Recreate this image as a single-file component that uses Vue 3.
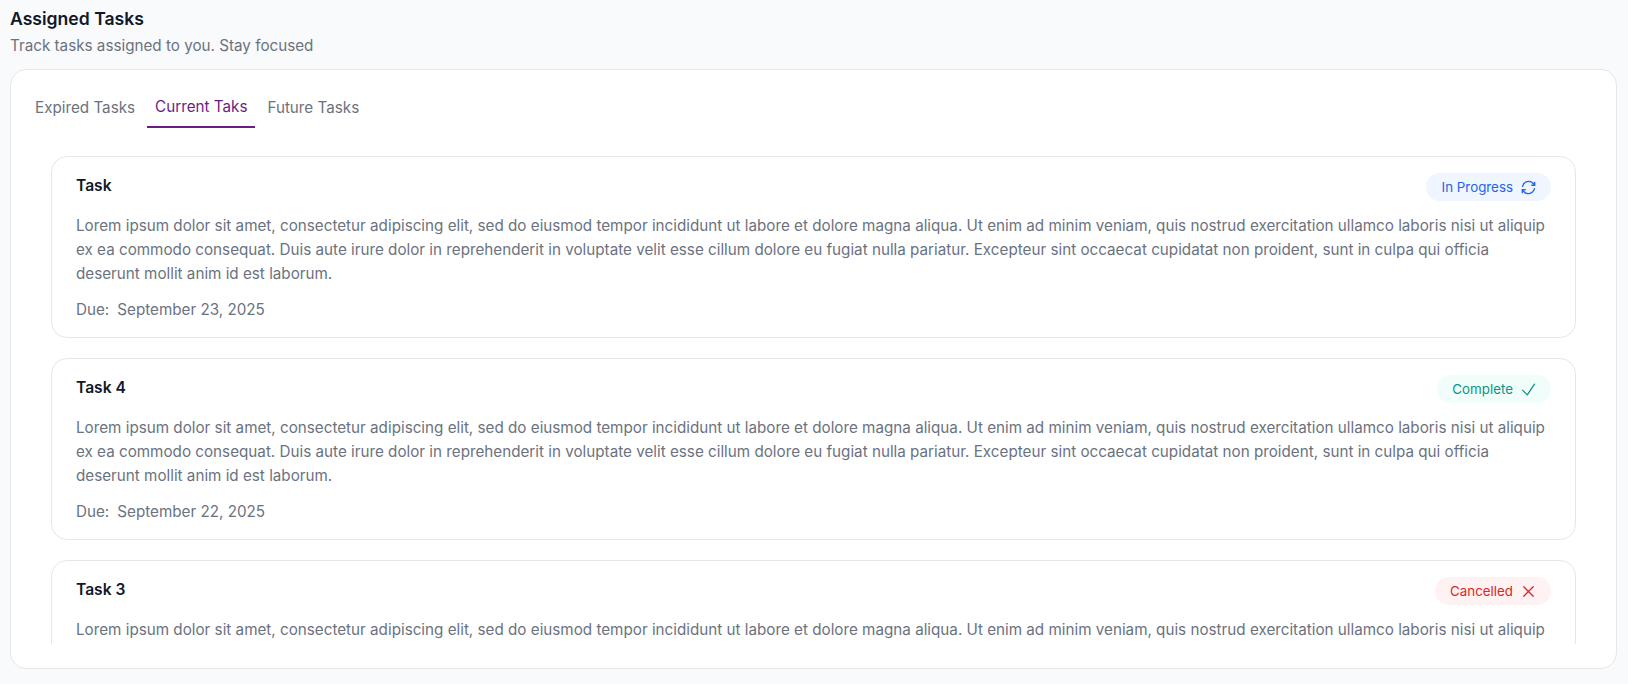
<script setup>
const lorem = 'Lorem ipsum dolor sit amet, consectetur adipiscing elit, sed do eiusmod tempor incididunt ut labore et dolore magna aliqua. Ut enim ad minim veniam, quis nostrud exercitation ullamco laboris nisi ut aliquip ex ea commodo consequat. Duis aute irure dolor in reprehenderit in voluptate velit esse cillum dolore eu fugiat nulla pariatur. Excepteur sint occaecat cupidatat non proident, sunt in culpa qui officia deserunt mollit anim id est laborum.'
const tasks = [
  { title: 'Task', status: 'In Progress', kind: 'progress', due: 'September 23, 2025' },
  { title: 'Task 4', status: 'Complete', kind: 'complete', due: 'September 22, 2025' },
  { title: 'Task 3', status: 'Cancelled', kind: 'cancelled', due: 'September 21, 2025' },
]
</script>

<template>
  <div class="page">
    <h1 class="title">Assigned Tasks</h1>
    <p class="subtitle">Track tasks assigned to you. Stay focused</p>
    <section class="panel">
      <div class="tabs">
        <button class="tab">Expired Tasks</button>
        <button class="tab active">Current Taks</button>
        <button class="tab">Future Tasks</button>
      </div>
      <div class="list">
        <article v-for="t in tasks" :key="t.title" class="card">
          <div class="head">
            <h2 class="name">{{ t.title }}</h2>
            <span class="badge" :class="t.kind">
              {{ t.status }}
              <svg v-if="t.kind === 'progress'" class="ic" viewBox="0 0 24 24" fill="none" stroke="currentColor" stroke-width="1.700" stroke-linecap="round" stroke-linejoin="round"><path d="M4.500 10.500A7.800 7.800 0 0 1 18 7L19.800 9"/><path d="M19.800 5.500v3.700h-3.700"/><path d="M19.500 13.500A7.800 7.800 0 0 1 6 17L4.200 15"/><path d="M4.200 18.500v-3.700h3.700"/></svg>
              <svg v-else-if="t.kind === 'complete'" class="ic" viewBox="0 0 24 24" fill="none" stroke="currentColor" stroke-width="1.600" stroke-linecap="round" stroke-linejoin="round"><path d="M4.500 12.750l6 6 9-13.500"/></svg>
              <svg v-else class="ic" viewBox="0 0 24 24" fill="none" stroke="currentColor" stroke-width="1.600" stroke-linecap="round" stroke-linejoin="round"><path d="M6 18L18 6M6 6l12 12"/></svg>
            </span>
          </div>
          <p class="body">{{ lorem }}</p>
          <p class="due"><span>Due:</span><span>{{ t.due }}</span></p>
        </article>
      </div>
    </section>
  </div>
</template>

<style>
html, body { margin: 0; background: #f9fafb; }
</style>

<style scoped>
.page {
  box-sizing: border-box;
  height: 684px;
  padding: 7px 11px 15px 10px;
  display: flex;
  flex-direction: column;
  font-family: Inter, "Liberation Sans", sans-serif;
  background: #f9fafb;
  overflow: hidden;
}
.title { margin: 0; font-size: 17.6px; line-height: 24px; font-weight: 600; color: #111827; }
.subtitle { margin: 4px 0 0; font-size: 15.23px; line-height: 22px; color: #6b7280; }
.panel {
  box-sizing: border-box;
  margin-top: 12px;
  flex: 1;
  min-height: 0;
  display: flex;
  flex-direction: column;
  background: #fff;
  border: 1px solid #e5e7eb;
  border-radius: 16px;
  padding: 17px 16px 24px;
}
.tabs { display: flex; gap: 4px; height: 41px; align-items: center; flex: none; }
.tab {
  box-sizing: border-box;
  height: 41px;
  padding: 0 8px;
  background: none;
  border: 0;
  font: inherit;
  font-size: 15.23px;
  color: #6b7280;
}
.tab.active { color: #6b1d85; border-bottom: 2px solid #6b1d85; }
.list {
  flex: 1;
  min-height: 0;
  overflow: hidden;
  margin-top: 28px;
  padding: 0 24px;
  display: flex;
  flex-direction: column;
  gap: 20px;
}
.card {
  box-sizing: border-box;
  flex: none;
  height: 182px;
  border: 1px solid #e5e7eb;
  border-radius: 16px;
  padding: 16px 24px;
}
.head { display: flex; justify-content: space-between; align-items: flex-start; }
.name { margin: 0; font-size: 15.6px; line-height: 24px; font-weight: 600; color: #111827; padding-top: 1px; }
.badge {
  display: flex;
  align-items: center;
  gap: 6px;
  height: 28px;
  padding: 0 13px 0 15.500px;
  border-radius: 999px;
  font-size: 13.350px;
}
.ic { width: 19px; height: 19px; }
.progress { background: #eff6ff; color: #2563eb; }
.complete { background: #f0fdfa; color: #0d9488; }
.cancelled { background: #fef2f2; color: #dc2626; }
.body { margin: 13px 0 0; font-size: 15.23px; line-height: 24px; color: #6b7280; }
.due { margin: 12px 0 0; display: flex; gap: 8px; font-size: 15.23px; line-height: 24px; color: #6b7280; }
</style>
